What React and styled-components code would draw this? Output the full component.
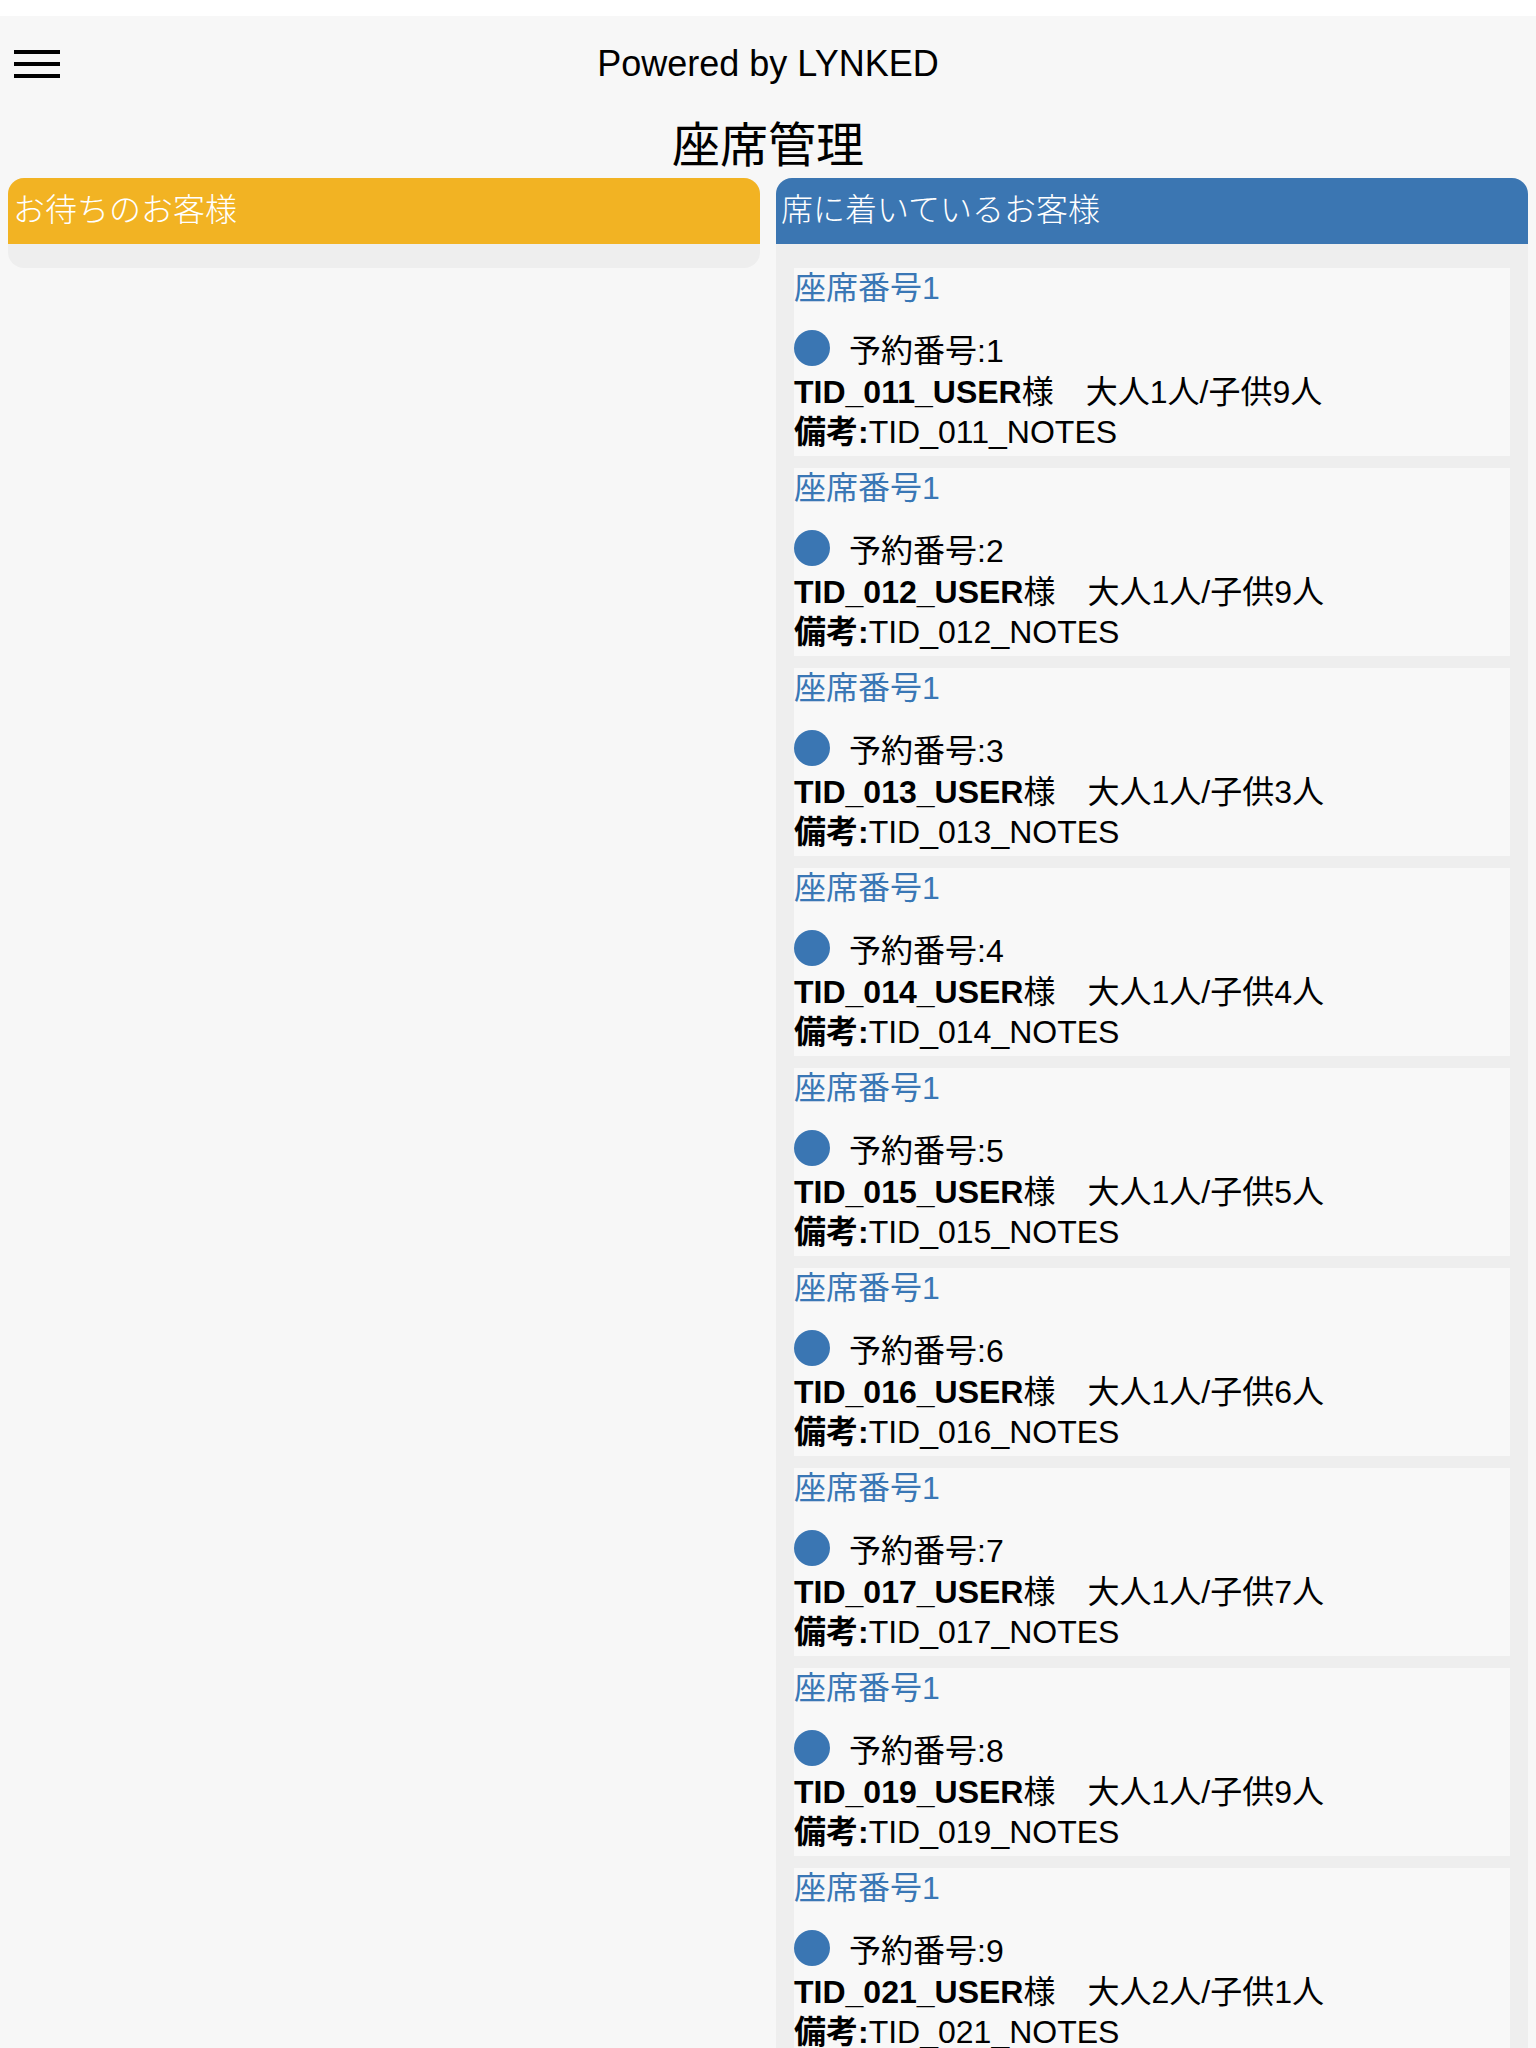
import React from 'react';
import styled, { createGlobalStyle } from 'styled-components';

const GlobalStyle = createGlobalStyle`
  body {
    margin: 0;
    background: #ffffff;
    font-family: 'Liberation Sans', 'Noto Sans CJK JP', sans-serif;
  }
`;

const Page = styled.div`
  margin-top: 16px;
  background-color: #f7f7f7;
  min-height: 2032px;
  color: #000;
`;

const TopBar = styled.header`
  display: grid;
  grid-template-columns: 1fr auto 1fr;
  align-items: center;
  height: 96px;
`;

const MenuButton = styled.button`
  display: flex;
  flex-direction: column;
  gap: 7.5px;
  width: 46px;
  margin-left: 14px;
  padding: 0;
  border: none;
  background: none;
  cursor: pointer;

  span {
    display: block;
    height: 4.5px;
    background: #000;
  }
`;

const Powered = styled.div`
  font-size: 36px;
  line-height: 40px;
  text-align: center;
`;

const Title = styled.h1`
  margin: 0;
  padding-bottom: 8px;
  font-size: 48px;
  font-weight: normal;
  line-height: 58px;
  text-align: center;
  font-family: 'Noto Sans CJK JP', sans-serif;
`;

const Columns = styled.div`
  display: grid;
  grid-template-columns: 1fr 1fr;
  gap: 16px;
  padding: 0 8px;
  align-items: start;
`;

const Panel = styled.section`
  background: #eeeeee;
  border-radius: 16px;
  overflow: hidden;
`;

const PanelHeader = styled.div`
  height: 66px;
  box-sizing: border-box;
  display: flex;
  align-items: center;
  padding: 0 0 8px 5px;
  font-size: 32px;
  color: #ffffff;
  background: ${(p) => p.$color};
  font-family: 'Noto Sans CJK JP', sans-serif;
  font-weight: 300;
`;

const PanelBody = styled.div`
  padding: 12px 18px;
`;

const Card = styled.div`
  background: #f8f8f8;
  margin-top: 12px;
  padding-bottom: 4px;
  font-size: 32px;
`;

const SeatLabel = styled.div`
  color: #3a77b5;
  line-height: 40px;
`;

const ReserveRow = styled.div`
  display: flex;
  align-items: center;
  gap: 19px;
  margin: 22px 0 6px;
  height: 36px;
`;

const Dot = styled.span`
  width: 36px;
  height: 36px;
  border-radius: 50%;
  background: #3a76b3;
  flex-shrink: 0;
`;

const Line = styled.div`
  line-height: 40px;
  white-space: nowrap;
`;

const customers = [
  { no: 1, id: '011', adult: 1, child: 9 },
  { no: 2, id: '012', adult: 1, child: 9 },
  { no: 3, id: '013', adult: 1, child: 3 },
  { no: 4, id: '014', adult: 1, child: 4 },
  { no: 5, id: '015', adult: 1, child: 5 },
  { no: 6, id: '016', adult: 1, child: 6 },
  { no: 7, id: '017', adult: 1, child: 7 },
  { no: 8, id: '019', adult: 1, child: 9 },
  { no: 9, id: '021', adult: 2, child: 1 },
];

function App() {
  return (
    <>
      <GlobalStyle />
      <Page>
        <TopBar>
          <MenuButton aria-label="menu">
            <span />
            <span />
            <span />
          </MenuButton>
          <Powered>Powered by LYNKED</Powered>
          <div />
        </TopBar>
        <Title>座席管理</Title>
        <Columns>
          <Panel>
            <PanelHeader $color="#f2b323">お待ちのお客様</PanelHeader>
            <PanelBody />
          </Panel>
          <Panel>
            <PanelHeader $color="#3b76b2">席に着いているお客様</PanelHeader>
            <PanelBody>
              {customers.map((c) => (
                <Card key={c.no}>
                  <SeatLabel>座席番号1</SeatLabel>
                  <ReserveRow>
                    <Dot />
                    <span>予約番号:{c.no}</span>
                  </ReserveRow>
                  <Line>
                    <b>TID_{c.id}_USER</b>様　大人{c.adult}人/子供{c.child}人
                  </Line>
                  <Line>
                    <b>備考:</b>TID_{c.id}_NOTES
                  </Line>
                </Card>
              ))}
            </PanelBody>
          </Panel>
        </Columns>
      </Page>
    </>
  );
}

export default App;
